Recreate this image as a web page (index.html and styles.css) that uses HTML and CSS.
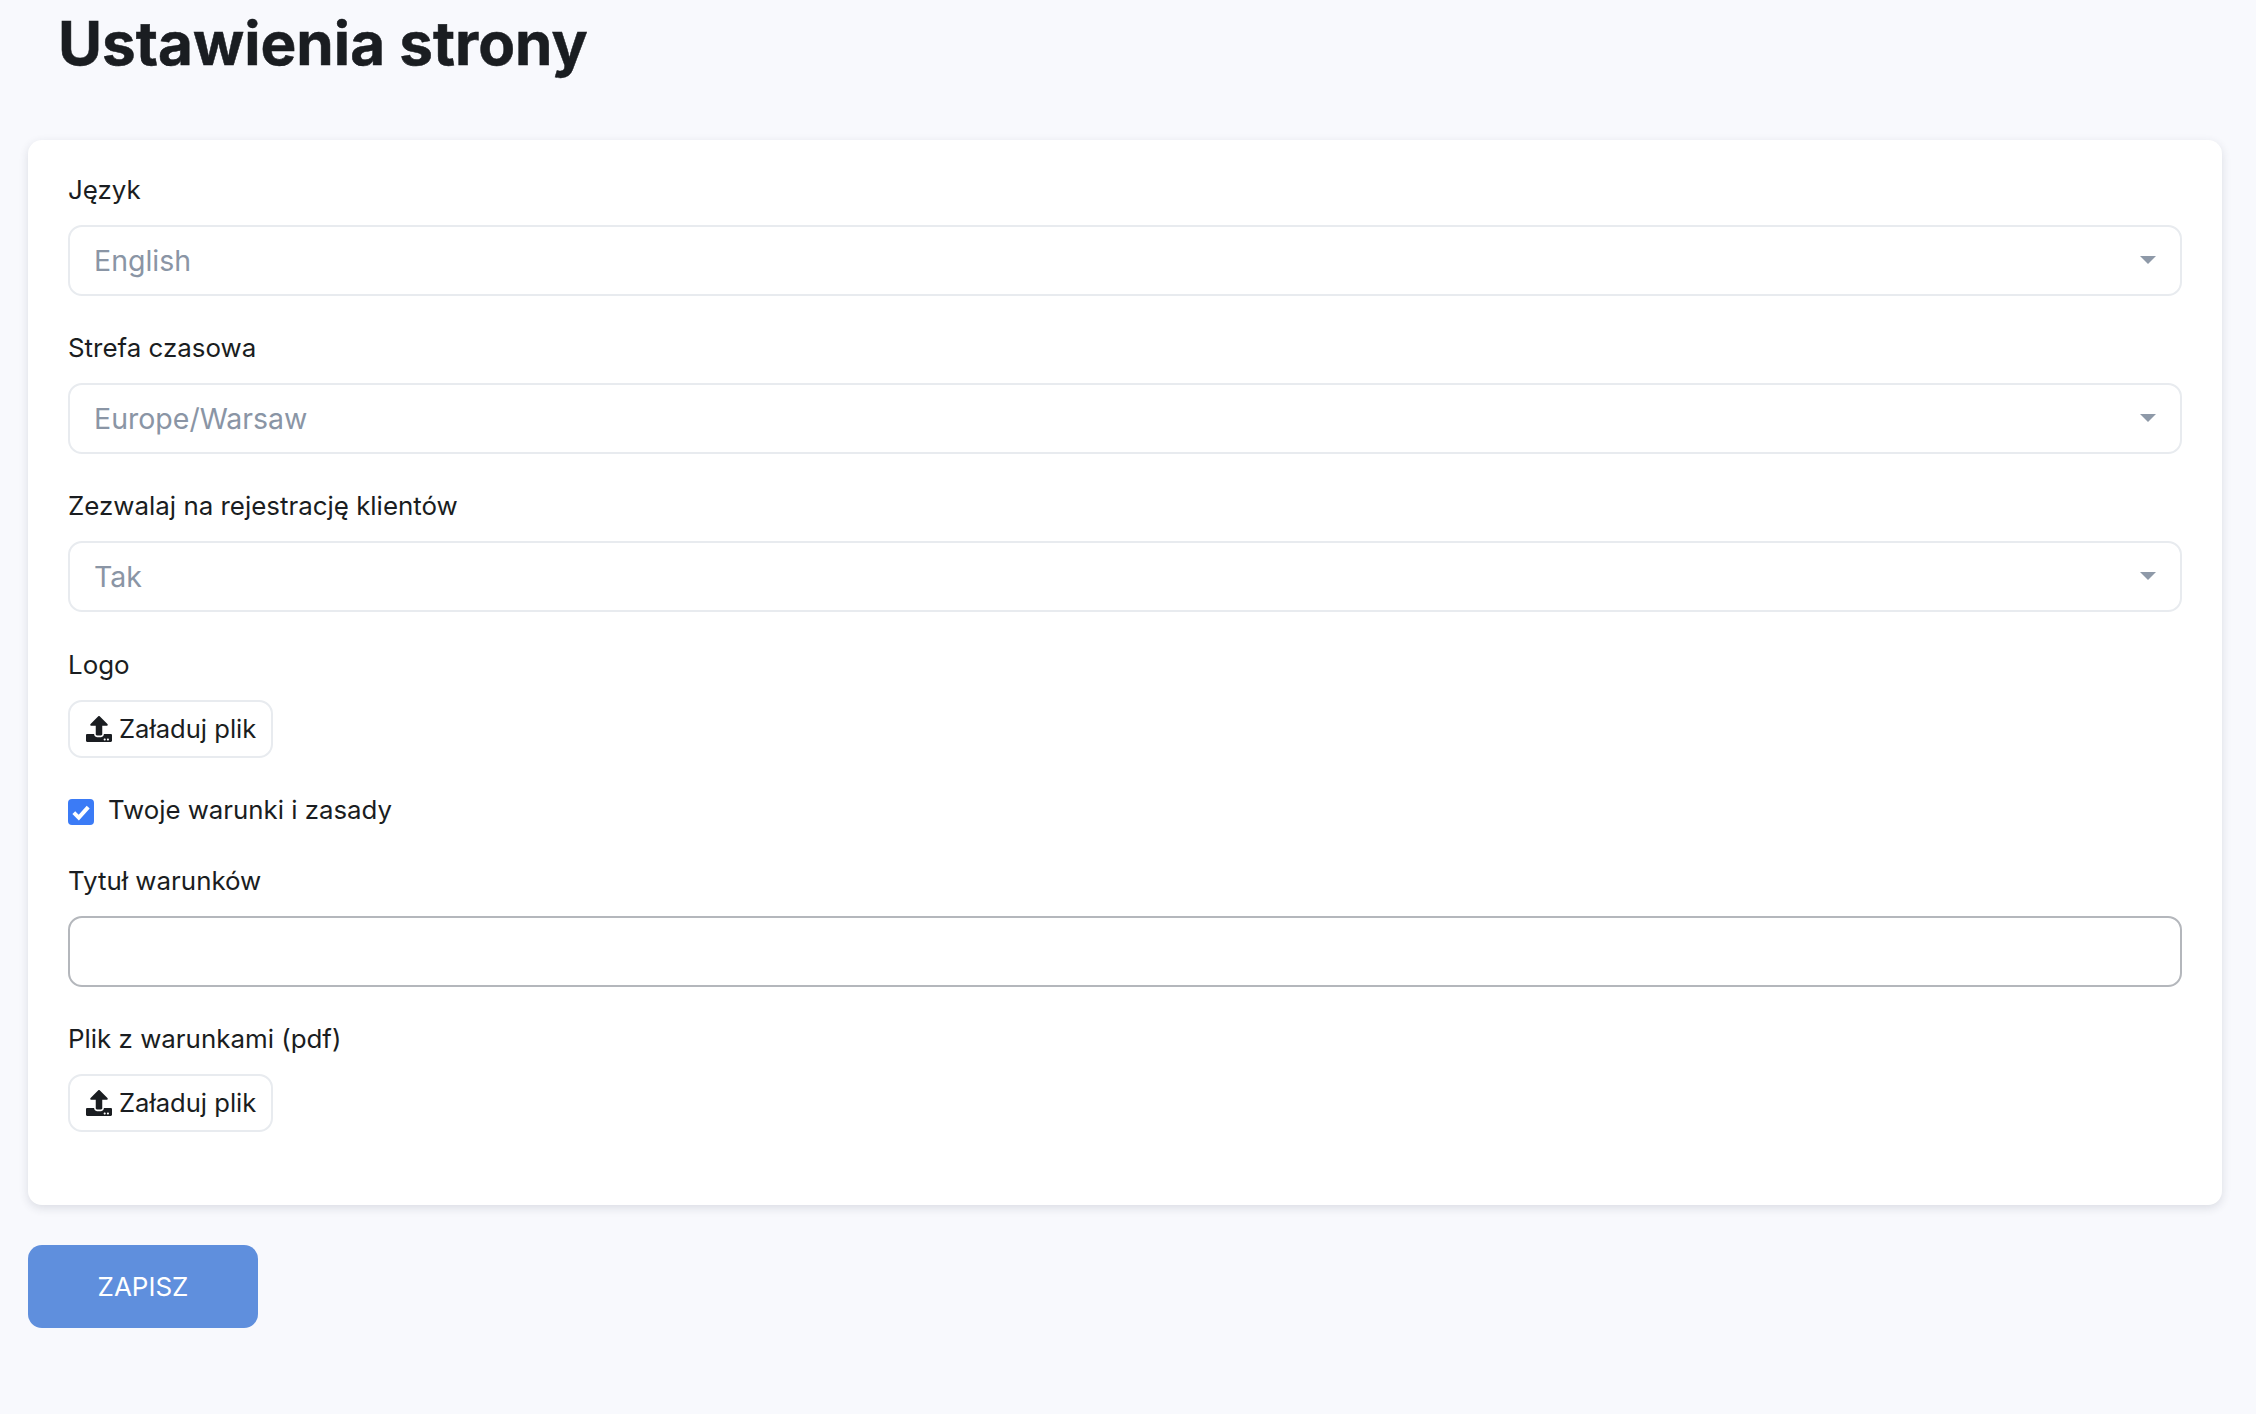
FILE: index.html

```html
<!DOCTYPE html>
<html>
<head>
  <meta charset="utf-8">
  <title>Ustawienia strony</title>
  <link rel="stylesheet" href="styles.css">
</head>
<body>
  <h1 class="page-title">Ustawienia strony</h1>
  <form class="settings-card">
    <div class="field">
      <label class="field-label">Język</label>
      <div class="select-wrap">
        <select class="field-select"><option>English</option></select>
      </div>
    </div>
    <div class="field">
      <label class="field-label">Strefa czasowa</label>
      <div class="select-wrap">
        <select class="field-select"><option>Europe/Warsaw</option></select>
      </div>
    </div>
    <div class="field">
      <label class="field-label">Zezwalaj na rejestrację klientów</label>
      <div class="select-wrap">
        <select class="field-select"><option>Tak</option></select>
      </div>
    </div>
    <div class="field">
      <label class="field-label">Logo</label>
      <button type="button" class="upload-btn">
        <svg class="upload-icon" viewBox="0 0 512 512"><path d="M296 384h-80c-13.3 0-24-10.7-24-24V192h-87.7c-17.8 0-26.7-21.5-14.1-34.1L242.3 5.7c7.5-7.5 19.8-7.5 27.3 0l152.2 152.2c12.6 12.6 3.7 34.1-14.1 34.1H320v168c0 13.3-10.7 24-24 24zm216-8v112c0 13.3-10.7 24-24 24H24c-13.3 0-24-10.7-24-24V376c0-13.3 10.7-24 24-24h136v8c0 30.9 25.1 56 56 56h80c30.9 0 56-25.1 56-56v-8h136c13.3 0 24 10.7 24 24zm-124 88c0-11-9-20-20-20s-20 9-20 20 9 20 20 20 20-9 20-20zm64 0c0-11-9-20-20-20s-20 9-20 20 9 20 20 20 20-9 20-20z"/></svg>
        <span>Załaduj plik</span>
      </button>
    </div>
    <label class="check-row">
      <span class="check-box">
        <svg viewBox="0 0 26 26"><path d="M5.8 13.6l5 5 9.4-10.4" fill="none" stroke="#fff" stroke-width="4"/></svg>
      </span>
      Twoje warunki i zasady
    </label>
    <div class="field">
      <label class="field-label">Tytuł warunków</label>
      <input type="text" class="field-input">
    </div>
    <div class="field">
      <label class="field-label">Plik z warunkami (pdf)</label>
      <button type="button" class="upload-btn">
        <svg class="upload-icon" viewBox="0 0 512 512"><path d="M296 384h-80c-13.3 0-24-10.7-24-24V192h-87.7c-17.8 0-26.7-21.5-14.1-34.1L242.3 5.7c7.5-7.5 19.8-7.5 27.3 0l152.2 152.2c12.6 12.6 3.7 34.1-14.1 34.1H320v168c0 13.3-10.7 24-24 24zm216-8v112c0 13.3-10.7 24-24 24H24c-13.3 0-24-10.7-24-24V376c0-13.3 10.7-24 24-24h136v8c0 30.9 25.1 56 56 56h80c30.9 0 56-25.1 56-56v-8h136c13.3 0 24 10.7 24 24zm-124 88c0-11-9-20-20-20s-20 9-20 20 9 20 20 20 20-9 20-20zm64 0c0-11-9-20-20-20s-20 9-20 20 9 20 20 20 20-9 20-20z"/></svg>
        <span>Załaduj plik</span>
      </button>
    </div>
  </form>
  <button type="button" class="save-btn">ZAPISZ</button>
</body>
</html>
```

FILE: styles.css

```css
html {
  height: 100%;
}
body {
  font-family: Inter, "Noto Sans", sans-serif;
  background-color: #f8f9fd;
  color: #1a1d21;
  margin: 0;
  padding: 0 34px 0 28px;
  min-height: 100%;
  box-sizing: border-box;
}
.page-title {
  font-size: 60.2px;
  font-weight: 700;
  -webkit-text-stroke: 0.5px #1a1d21;
  line-height: 88px;
  margin: 0;
  padding-left: 30px;
  height: 140px;
  box-sizing: border-box;
}
.settings-card {
  background-color: #fff;
  border-radius: 14px;
  box-shadow: 0 3px 10px rgba(40, 50, 70, 0.14);
  padding: 32px 40px 0;
  height: 1065px;
  box-sizing: border-box;
}
.field {
  margin-bottom: 34.2px;
}
.field-label {
  display: block;
  font-size: 25.9px;
  line-height: 36px;
  margin-bottom: 17px;
}
.select-wrap {
  position: relative;
}
.select-wrap::after {
  content: "";
  position: absolute;
  right: 26px;
  top: 31px;
  border-left: 8px solid transparent;
  border-right: 8px solid transparent;
  border-top: 8px solid #8e99a8;
}
.field-select,
.field-input {
  display: block;
  width: 100%;
  height: 71px;
  border-radius: 14px;
  background-color: #fff;
  box-sizing: border-box;
  font-family: inherit;
  font-size: 28.5px;
  padding: 0 24px;
  outline: none;
}
.field-select {
  appearance: none;
  border: 2px solid #e8ebef;
  color: #8a95a5;
}
.field-input {
  border: 2px solid #b4b7bc;
}
.upload-btn {
  display: flex;
  align-items: center;
  gap: 7px;
  height: 58px;
  width: 205px;
  padding: 0 16px;
  border: 2px solid #e8ebef;
  border-radius: 14px;
  background-color: #fff;
  color: #1a1d21;
  font-family: inherit;
  font-size: 25.6px;
  white-space: nowrap;
  box-sizing: border-box;
}
.upload-icon {
  width: 26px;
  height: 26px;
  fill: #1a1d21;
  flex: none;
}
.check-row {
  display: flex;
  align-items: center;
  gap: 14px;
  font-size: 25.8px;
  line-height: 36px;
  margin-bottom: 35px;
}
.check-box {
  width: 26px;
  height: 26px;
  border-radius: 4px;
  background-color: #3b7bf6;
  flex: none;
  margin-top: 4px;
}
.check-box svg {
  display: block;
}
.save-btn {
  display: block;
  width: 230px;
  height: 83px;
  margin-top: 40px;
  border: none;
  border-radius: 14px;
  background-color: #5f8fdd;
  color: #fff;
  font-family: inherit;
  font-size: 26px;
}
```
